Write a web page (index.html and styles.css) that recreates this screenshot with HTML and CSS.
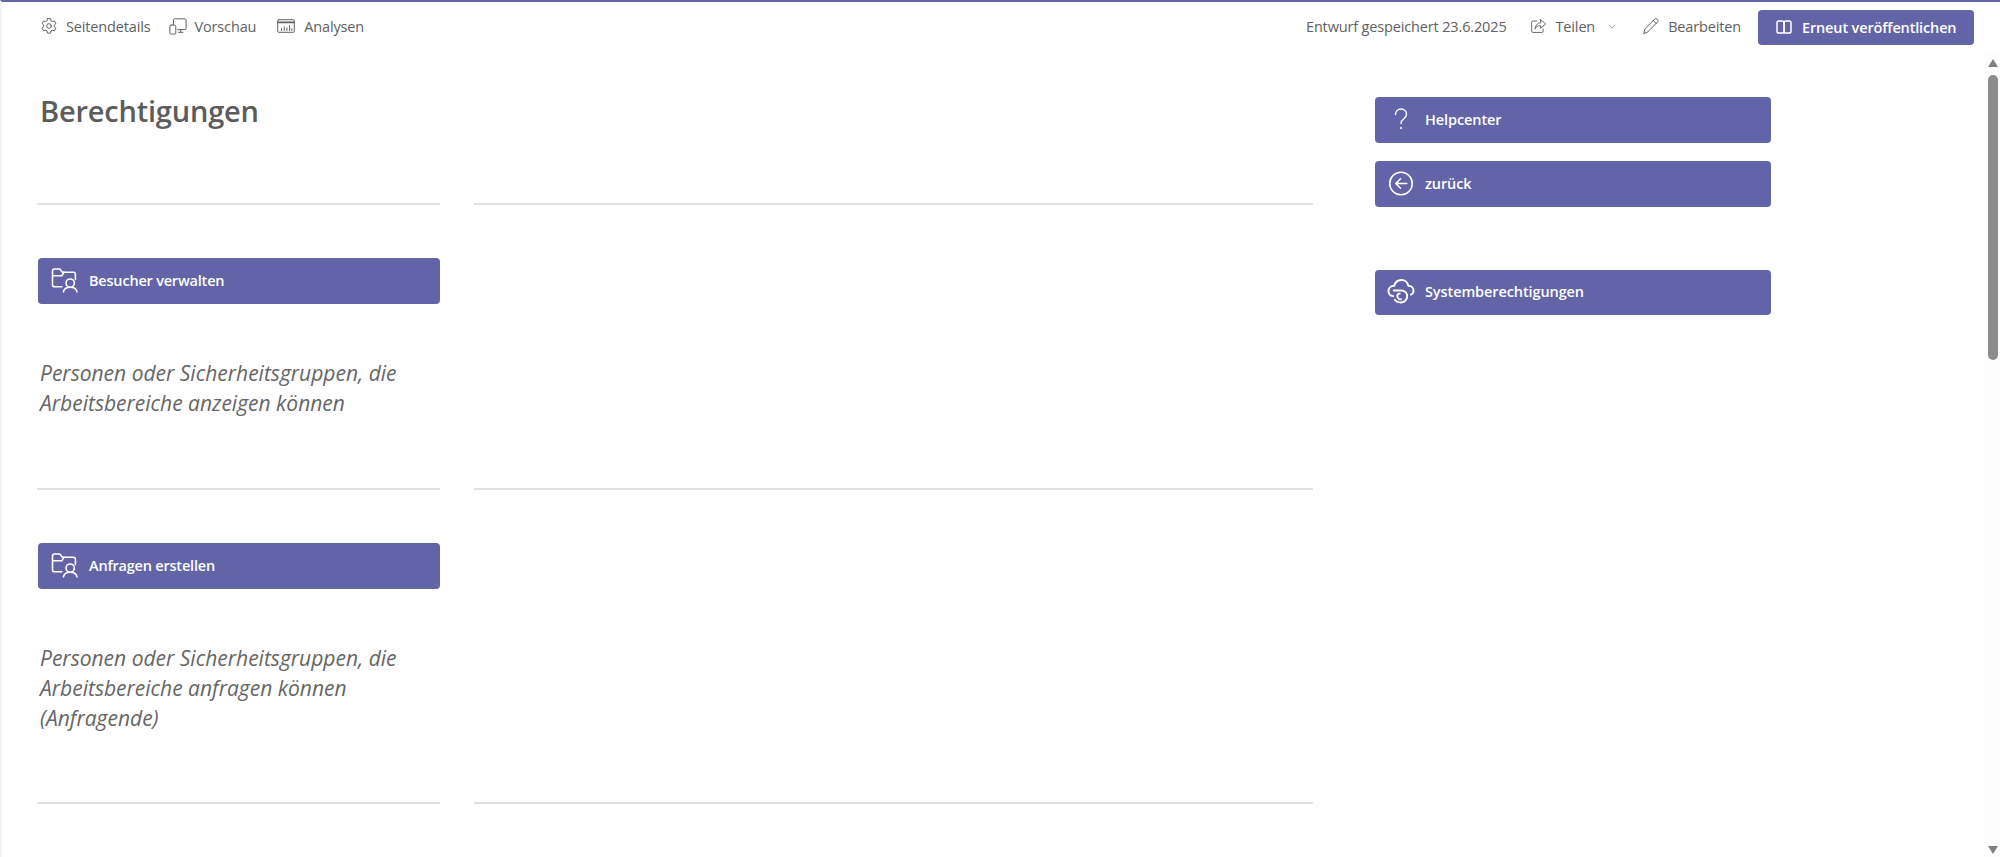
FILE: index.html
```html
<!DOCTYPE html>
<html lang="de">
<head>
  <meta charset="UTF-8">
  <title>Berechtigungen</title>
  <link rel="stylesheet" href="styles.css">
</head>
<body>
  <div class="page">
    <header class="topbar">
      <nav class="topbar-left">
        <a class="cmd cmd-details">
          <svg class="icon" viewBox="0 0 20 20"><path d="M8.300 1.800h3.400l.5 2.400 1.500.9 2.300-.8 1.700 3-1.800 1.600v1.900l1.800 1.600-1.700 3-2.300-.8-1.500.9-.5 2.400H8.300l-.5-2.400-1.500-.9-2.300.8-1.700-3 1.800-1.600V8.900L2.300 7.300l1.700-3 2.300.8 1.500-.9z"/><circle cx="10" cy="10" r="2.600"/></svg>
          Seitendetails
        </a>
        <a class="cmd cmd-preview">
          <svg class="icon" viewBox="0 0 20 20"><path d="M5 8.500V3.200C5 2.500 5.500 2 6.200 2h11.600c.7 0 1.200.5 1.200 1.200v9.600c0 .7-.5 1.200-1.200 1.200H9.500"/><path d="M10.500 17h5M13 14v3"/><rect x="1" y="9" width="6.500" height="10" rx="1.300"/></svg>
          Vorschau
        </a>
        <a class="cmd cmd-stats">
          <svg class="icon" viewBox="0 0 20 20"><rect x=".8" y="3" width="18.400" height="14" rx=".8"/><path class="icon-bar" d="M1 6h18"/><path d="M5 15v-2M8 15v-4M11 15v-3M14 15V9.500M16.500 15v-2"/></svg>
          Analysen
        </a>
      </nav>
      <div class="topbar-right">
        <span class="saved">Entwurf gespeichert 23.6.2025</span>
        <a class="cmd cmd-share">
          <svg class="icon icon-small" viewBox="0 0 20 20"><path d="M8 3.500H3.500c-.8 0-1.500.7-1.500 1.500v10.500c0 .8.700 1.500 1.500 1.500H14c.8 0 1.500-.7 1.500-1.500V13"/><path d="M12.500 2l6 5-6 5V9c-3.500 0-5.500 1.200-6.500 4 0-4.500 2.500-7 6.500-7.500z"/></svg>
          Teilen
          <svg class="chevron" viewBox="0 0 10 6"><path d="M1 1l4 4 4-4"/></svg>
        </a>
        <a class="cmd cmd-edit">
          <svg class="icon" viewBox="0 0 20 20"><path d="M2 18l1.200-4.800L14 2.400c.9-.9 2.300-.9 3.200 0s.9 2.300 0 3.200L6.500 16.500z"/><path d="M12.500 4l3.500 3.500"/></svg>
          Bearbeiten
        </a>
        <button class="publish">
          <svg class="icon icon-white" viewBox="0 0 16 16"><rect x="1" y="2" width="7" height="12" rx="1.800"/><rect x="8" y="2" width="7" height="12" rx="1.800"/></svg>
          Erneut veröffentlichen
        </button>
      </div>
    </header>

    <div class="body-row">
      <main class="content">
        <div class="sections">
          <section class="section section-title">
            <div class="cell"><h1>Berechtigungen</h1></div>
            <div class="cell"></div>
          </section>

          <section class="section section-first">
            <div class="cell">
              <a class="action">
                <svg class="action-icon" viewBox="0 0 26 24"><path d="M10 18H3c-1.100 0-2-.9-2-2V3c0-1.100.9-2 2-2h5l2.500 3H21c1.100 0 2 .9 2 2v5"/><path d="M1 7.500h9l2-3.500"/><circle cx="18" cy="14.500" r="4"/><path d="M11.500 23c.5-3 3-4.500 6.500-4.500s6 1.500 6.500 4.500"/></svg>
                Besucher verwalten
              </a>
              <p class="note">Personen oder Sicherheitsgruppen, die Arbeitsbereiche anzeigen können</p>
            </div>
            <div class="cell"></div>
          </section>

          <section class="section section-second">
            <div class="cell">
              <a class="action">
                <svg class="action-icon" viewBox="0 0 26 24"><path d="M10 18H3c-1.100 0-2-.9-2-2V3c0-1.100.9-2 2-2h5l2.500 3H21c1.100 0 2 .9 2 2v5"/><path d="M1 7.500h9l2-3.500"/><circle cx="18" cy="14.500" r="4"/><path d="M11.500 23c.5-3 3-4.500 6.500-4.500s6 1.500 6.500 4.500"/></svg>
                Anfragen erstellen
              </a>
              <p class="note">Personen oder Sicherheitsgruppen, die Arbeitsbereiche anfragen können (Anfragende)</p>
            </div>
            <div class="cell"></div>
          </section>
        </div>

        <aside class="side">
          <a class="action">
            <span class="action-slot"><svg class="help-icon" viewBox="0 0 14 22"><path d="M1.500 6.500C1.500 3.500 3.800 1 7 1s5.500 2.300 5.500 5.200c0 2-1 3.200-2.700 4.500C8 12 7 13 7 15.500"/><circle class="dot" cx="7" cy="20" r="1.100"/></svg></span>
            Helpcenter
          </a>
          <a class="action">
            <span class="action-slot"><svg class="action-icon" viewBox="0 0 24 24"><circle cx="12" cy="12" r="10.800"/><path d="M17.500 12h-10M11.500 7.500L7 12l4.500 4.500"/></svg></span>
            zurück
          </a>
          <a class="action action-system">
            <span class="action-slot"><svg class="action-icon icon-cloud" viewBox="0 0 26 24"><path d="M5.500 16.500C2.500 16.200 1 14 1 11.500 1 8.500 3.500 6.500 6.500 6.500 7.500 3 10 1 13.500 1 17 1 19.500 3.500 20 6.500c3 0 5 2 5 4.500 0 2-1 3.500-2.500 4"/><path d="M6 11h7c3.500 0 6 2.500 6 5.500 0 3.500-3 6-6.500 6-2.500 0-4.500-1-5.500-2.500"/><path d="M13 19.500c-2 .3-3.500-1.300-3.500-3.200 0-1.400 1-2.300 2.300-2.300"/></svg></span>
            Systemberechtigungen
          </a>
        </aside>
      </main>

      <div class="scrollbar">
        <span class="arrow arrow-up"></span>
        <span class="thumb"></span>
        <span class="arrow arrow-down"></span>
      </div>
    </div>
  </div>
</body>
</html>
```

FILE: styles.css
```css
html, body {
  margin: 0;
  height: 100%;
  overflow: hidden;
}
body {
  font-family: "Open Sans", "Noto Sans", Arial, sans-serif;
  background: #fff;
  color: #616161;
}
.page {
  height: 857px;
  box-sizing: border-box;
  border-top: 2px solid #6264a7;
  border-left: 2px solid #f3f3f3;
  display: flex;
  flex-direction: column;
}

/* top command bar */
.topbar {
  height: 50px;
  box-sizing: border-box;
  padding: 0 26px 0 38px;
  display: flex;
  justify-content: space-between;
  align-items: center;
  font-size: 14.500px;
  letter-spacing: -0.15px;
}
.topbar-left,
.topbar-right {
  display: flex;
  align-items: center;
}
.cmd {
  display: flex;
  align-items: center;
  padding-bottom: 2px;
  color: #616161;
}
.icon {
  width: 18px;
  height: 18px;
  fill: none;
  stroke: #616161;
  stroke-width: 1.100;
  stroke-linejoin: round;
  stroke-linecap: round;
  flex: none;
}
.icon-bar {
  stroke-width: 2;
}
.icon-small {
  width: 17px;
  height: 17px;
}
.icon-white {
  stroke: #fff;
  stroke-width: 1.500;
  width: 16px;
  height: 16px;
}
.cmd-details {
  gap: 8px;
  margin-right: 19px;
}
.cmd-preview {
  gap: 7px;
  margin-right: 21px;
}
.cmd-stats {
  gap: 9px;
}
.saved {
  padding-bottom: 2px;
  margin-right: 23px;
}
.cmd-share {
  gap: 9px;
  margin-right: 26px;
}
.chevron {
  width: 8px;
  height: 5px;
  margin-left: 4px;
  fill: none;
  stroke: #888;
  stroke-width: 1;
}
.cmd-edit {
  gap: 8px;
  margin-right: 17px;
}
.publish {
  width: 216px;
  height: 35px;
  padding: 0 0 0 18px;
  border: none;
  border-radius: 4px;
  background: #6264a7;
  color: #fff;
  font-family: inherit;
  font-size: 14.500px;
  font-weight: 600;
  letter-spacing: -0.15px;
  display: flex;
  align-items: center;
  gap: 10px;
}

/* page content */
.body-row {
  flex: 1;
  display: flex;
  min-height: 0;
}
.content {
  flex: 1;
  display: flex;
  padding-left: 35px;
  min-width: 0;
}
.sections {
  width: 1276px;
  margin-right: 62px;
}
.section {
  display: grid;
  grid-template-columns: 403px 839px;
  column-gap: 34px;
}
.cell {
  border-bottom: 2px solid #e1e1e1;
  box-sizing: border-box;
}
.section-title {
  height: 153px;
}
.section-first {
  height: 285px;
}
.section-second {
  height: 314px;
}
h1 {
  margin: 39px 0 0 3px;
  font-size: 29px;
  line-height: 40px;
  font-weight: 600;
  letter-spacing: -0.2px;
  color: #5c5c5c;
}
.section-first .action,
.section-second .action {
  margin: 53px 0 0 1px;
  padding-left: 13px;
  gap: 10px;
  letter-spacing: -0.2px;
}
.action {
  height: 46px;
  box-sizing: border-box;
  padding: 0 0 2px 12px;
  display: flex;
  align-items: center;
  gap: 10px;
  background: #6264a7;
  border-radius: 4px;
  color: #fff;
  font-size: 14.500px;
  font-weight: 600;
  letter-spacing: -0.1px;
}
.action-icon {
  width: 28px;
  height: 25px;
  fill: none;
  stroke: #fff;
  stroke-width: 1.500;
  stroke-linecap: round;
  stroke-linejoin: round;
  flex: none;
}
.icon-cloud {
  stroke-width: 1.800;
}
.note {
  width: 395px;
  margin: 54px 0 0 3px;
  font-size: 21px;
  line-height: 30px;
  font-style: italic;
  color: #666;
}

/* right column */
.side {
  width: 396px;
  padding-top: 45px;
  display: flex;
  flex-direction: column;
  gap: 18px;
}
.action-slot {
  width: 28px;
  display: flex;
  justify-content: center;
  flex: none;
}
.help-icon {
  width: 14px;
  height: 22px;
  fill: none;
  stroke: #fff;
  stroke-width: 1.400;
  stroke-linecap: round;
}
.help-icon .dot {
  fill: #fff;
  stroke: none;
}
.action-system {
  margin-top: 45px;
  height: 45px;
}

/* scrollbar strip */
.scrollbar {
  width: 15px;
  margin-left: auto;
  padding-top: 7px;
  display: flex;
  flex-direction: column;
  align-items: center;
  background: #fdfdfd;
}
.thumb {
  width: 10px;
  height: 285px;
  margin-top: 8px;
  border-radius: 5px;
  background: #8c8c8c;
}
.arrow {
  width: 0;
  height: 0;
  border-left: 5.500px solid transparent;
  border-right: 5.500px solid transparent;
}
.arrow-up {
  border-bottom: 8px solid #808080;
}
.arrow-down {
  border-top: 8px solid #808080;
  margin-top: auto;
  margin-bottom: 3px;
}
```
